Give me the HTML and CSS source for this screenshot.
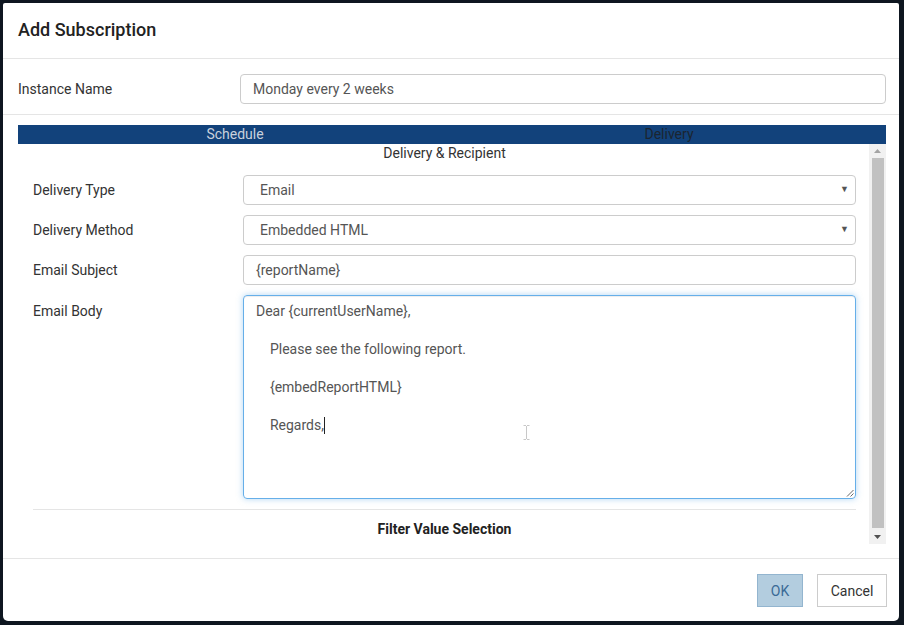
FILE: index.html
```html
<!DOCTYPE html>
<html>
<head>
<meta charset="utf-8">
<link rel="stylesheet" href="styles.css">
</head>
<body>
<div class="dialog">
  <div class="header"><h1 class="title">Add Subscription</h1></div>
  <div class="instance-row">
    <label class="instance-label">Instance Name</label>
    <div class="field instance-input">Monday every 2 weeks</div>
  </div>
  <div class="body">
    <div class="tabs">
      <div class="tab tab-schedule">Schedule</div>
      <div class="tab tab-delivery">Delivery</div>
    </div>
    <div class="scroll">
      <div class="scroll-content">
        <div class="section-title">Delivery &amp; Recipient</div>
        <div class="form-row">
          <div class="form-label">Delivery Type</div>
          <div class="field select">Email<span class="caret">&#9660;</span></div>
        </div>
        <div class="form-row">
          <div class="form-label">Delivery Method</div>
          <div class="field select">Embedded HTML<span class="caret">&#9660;</span></div>
        </div>
        <div class="form-row">
          <div class="form-label">Email Subject</div>
          <div class="field">{reportName}</div>
        </div>
        <div class="form-row top">
          <div class="form-label">Email Body</div>
          <div class="field textarea"><div class="ta-text">Dear {currentUserName},

    Please see the following report.

    {embedReportHTML}

    Regards,<span class="text-caret"></span></div>
            <svg class="ibeam" width="7" height="15" viewBox="0 0 7 15"><path d="M0.5 0.5h2.5M4 0.5h2.5M3.5 1v13M0.5 14.5h2.5M4 14.5h2.5" stroke="#c8c8c8" stroke-width="1" fill="none"/></svg>
            <svg class="grip" width="9" height="9" viewBox="0 0 9 9"><path d="M8.5 2L2 8.5M8.5 5.5L5.5 8.5" stroke="#666" stroke-width="1"/></svg>
          </div>
        </div>
        <div class="divider"></div>
        <div class="section-title bold">Filter Value Selection</div>
      </div>
      <div class="scrollbar">
        <div class="sb-arrow"><svg width="7" height="4" viewBox="0 0 7 4"><path d="M0 4L3.5 0L7 4Z" fill="#a3a3a3"/></svg></div>
        <div class="sb-thumb"></div>
        <div class="sb-arrow"><svg width="7" height="4" viewBox="0 0 7 4"><path d="M0 0L3.5 4L7 0Z" fill="#505050"/></svg></div>
      </div>
    </div>
  </div>
  <div class="footer">
    <button class="btn btn-ok">OK</button>
    <button class="btn btn-cancel">Cancel</button>
  </div>
</div>
</body>
</html>
```
FILE: styles.css
```css
* { box-sizing: border-box; }
html, body { margin: 0; padding: 0; }
body {
  background: #0e1620;
  font-family: Roboto, "Liberation Sans", Arial, sans-serif;
  font-size: 14px;
  color: #333;
  width: 904px;
  height: 625px;
  overflow: hidden;
  padding: 3px 0 0 3px;
}
.dialog {
  width: 896px;
  height: 618px;
  background: #fff;
  border-radius: 2px 2px 5px 5px;
  display: flex;
  flex-direction: column;
}
.header {
  height: 56px;
  border-bottom: 1px solid #e5e5e5;
  display: flex;
  align-items: center;
  padding-left: 15px;
}
.title {
  margin: 0;
  font-size: 18px;
  font-weight: 500;
  color: #222;
  position: relative;
  top: -1px;
}
.instance-row {
  display: flex;
  align-items: center;
  padding: 15px 13px 10px 15px;
  border-bottom: 1px solid #e5e5e5;
}
.instance-label { width: 222px; flex: none; color: #333; }
.field {
  flex: 1;
  height: 30px;
  border: 1px solid #ccc;
  border-radius: 4px;
  padding: 0 12px;
  display: flex;
  align-items: center;
  color: #555;
  position: relative;
}
.body {
  padding: 10px 13px 0 15px;
  flex: none;
}
.tabs {
  display: flex;
  height: 19px;
  background: #12427b;
}
.tab {
  flex: 1;
  text-align: center;
  line-height: 18px;
  font-size: 14px;
}
.tab-schedule { color: #c9d1dd; }
.tab-delivery { color: #1b2530; }
.scroll {
  height: 400px;
  display: flex;
  overflow: hidden;
}
.scroll-content {
  flex: 1;
  padding: 0 13px 0 15px;
}
.section-title {
  text-align: center;
  line-height: 18px;
  margin-bottom: 13px;
  color: #333;
}
.section-title.bold {
  font-weight: 700;
  margin-top: 10px;
  color: #222;
}
.form-row {
  display: flex;
  align-items: center;
  margin-bottom: 10px;
}
.form-row.top { align-items: flex-start; }
.form-row.top .form-label { padding-top: 8px; }
.form-label { width: 210px; flex: none; color: #333; }
.select { padding-left: 16px; padding-right: 0; }
.caret {
  position: absolute;
  right: 6px;
  top: 8px;
  font-size: 9px;
  color: #555;
}
.textarea {
  height: 204px;
  align-items: flex-start;
  border-color: #66afe9;
  box-shadow: inset 0 1px 1px rgba(0,0,0,.075), 0 0 6px rgba(102,175,233,.5);
  padding: 6px 12px;
}
.ta-text {
  white-space: pre;
  line-height: 19px;
  color: #555;
}
.text-caret {
  display: inline-block;
  width: 1px;
  height: 17px;
  background: #222;
  vertical-align: -4px;
}
.ibeam { position: absolute; left: 279px; top: 129px; }
.grip { position: absolute; right: 1px; bottom: 1px; }
.divider {
  height: 1px;
  background: #e5e5e5;
  margin-top: 0;
}
.scrollbar {
  width: 17px;
  flex: none;
  background: #f1f1f1;
  display: flex;
  flex-direction: column;
  align-items: center;
}
.sb-arrow {
  height: 14px;
  display: flex;
  align-items: center;
  justify-content: center;
  width: 100%;
}
.sb-thumb {
  flex: 1;
  width: 12px;
  background: #c1c1c1;
  margin: 0 0 2px;
}
.footer {
  margin-top: 14px;
  border-top: 1px solid #e5e5e5;
  display: flex;
  justify-content: flex-end;
  gap: 14px;
  padding: 15px 12px 0 0;
}
.btn {
  height: 33px;
  font-family: Roboto, "Liberation Sans", Arial, sans-serif;
  font-size: 14px;
  border-radius: 0;
  padding: 0 12px;
  cursor: pointer;
}
.btn-ok {
  width: 46px;
  background: #b3cddf;
  border: 1px solid #93b5cf;
  color: #3a6a96;
}
.btn-cancel {
  width: 70px;
  background: #fff;
  border: 1px solid #ccc;
  color: #333;
}
```
